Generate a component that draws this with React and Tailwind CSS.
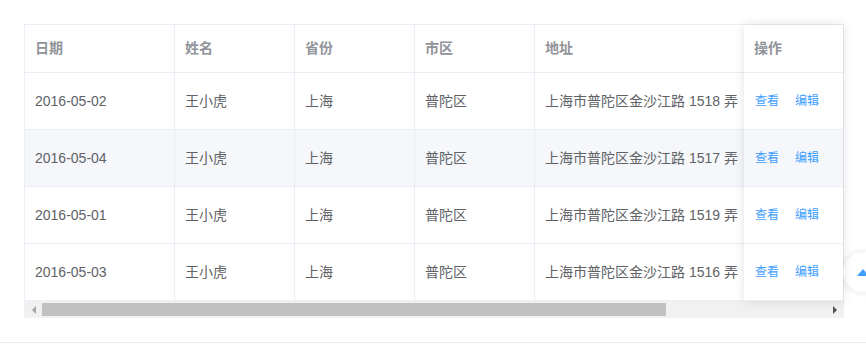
import React from "react";

const rows = [
  { date: "2016-05-02", name: "王小虎", province: "上海", city: "普陀区", address: "上海市普陀区金沙江路 1518 弄" },
  { date: "2016-05-04", name: "王小虎", province: "上海", city: "普陀区", address: "上海市普陀区金沙江路 1517 弄" },
  { date: "2016-05-01", name: "王小虎", province: "上海", city: "普陀区", address: "上海市普陀区金沙江路 1519 弄" },
  { date: "2016-05-03", name: "王小虎", province: "上海", city: "普陀区", address: "上海市普陀区金沙江路 1516 弄" },
];

const font = { fontFamily: '"Liberation Sans", "Noto Sans CJK SC", sans-serif' };
const th = 'shrink-0 h-full border-r border-[#ebeef5] px-[10px] flex items-center font-bold text-[#909399]';
const td = 'shrink-0 h-full border-r border-[#ebeef5] px-[10px] flex items-center text-[#606266] whitespace-nowrap';

const App = () => {
  return (
    <div className="relative w-[866px] h-[347px] bg-white text-[14px]" style={font}>
      <div className="pt-6 pl-6">
        <div className="w-[820px] border-l border-t border-r border-[#ebeef5]">
          <div className="flex">
            {/* scrolling part */}
            <div className="w-[719px] overflow-hidden">
              <div className="w-[1030px]">
                <div className="flex h-[48px] border-b border-[#ebeef5]">
                  <div className={th + ' w-[150px]'}>日期</div>
                  <div className={th + ' w-[120px]'}>姓名</div>
                  <div className={th + ' w-[120px]'}>省份</div>
                  <div className={th + ' w-[120px]'}>市区</div>
                  <div className={th + ' w-[300px]'}>地址</div>
                </div>
                {rows.map((r, i) => (
                  <div key={i} className={'flex h-[57px] border-b border-[#ebeef5] ' + (i === 1 ? 'bg-[#f5f7fa]' : 'bg-white')}>
                    <div className={td + ' w-[150px]'}>{r.date}</div>
                    <div className={td + ' w-[120px]'}>{r.name}</div>
                    <div className={td + ' w-[120px]'}>{r.province}</div>
                    <div className={td + ' w-[120px]'}>{r.city}</div>
                    <div className={td + ' w-[300px]'}>{r.address}</div>
                  </div>
                ))}
              </div>
            </div>
            {/* fixed right column */}
            <div className="relative z-10 w-[99px] bg-white shadow-[0_0_10px_rgba(0,0,0,0.12)]">
              <div className="flex h-[48px] border-b border-[#ebeef5] px-[10px] items-center font-bold text-[#909399]">操作</div>
              {rows.map((r, i) => (
                <div key={i} className={'flex h-[57px] border-b border-[#ebeef5] pl-[11px] items-center gap-4 text-[12px] text-[#409eff] ' + (i === 1 ? 'bg-[#f5f7fa]' : 'bg-white')}>
                  <span>查看</span>
                  <span>编辑</span>
                </div>
              ))}
            </div>
          </div>
          {/* horizontal scrollbar */}
          <div className="flex h-[17px] bg-[#f1f1f1]">
            <div className="w-[17px] flex items-center justify-center">
              <div className="w-0 h-0 border-y-[4px] border-y-transparent border-r-[4px] border-r-[#a3a3a3]" />
            </div>
            <div className="flex-1 py-[2px]">
              <div className="w-[624px] h-full bg-[#c1c1c1]" />
            </div>
            <div className="w-[17px] flex items-center justify-center">
              <div className="w-0 h-0 border-y-[4px] border-y-transparent border-l-[4px] border-l-[#505050]" />
            </div>
          </div>
        </div>
      </div>
      <div className="mt-[24px] border-t border-[#ebeef5]" />

      {/* back to top */}
      <div className="absolute left-[843px] top-[252px] w-10 h-10 rounded-full bg-white shadow-[0_0_6px_rgba(0,0,0,0.12)] flex items-center justify-center">
        <div className="w-0 h-0 border-x-[6px] border-x-transparent border-b-[7px] border-b-[#409eff]" />
      </div>
    </div>
  );
};

export default App;
